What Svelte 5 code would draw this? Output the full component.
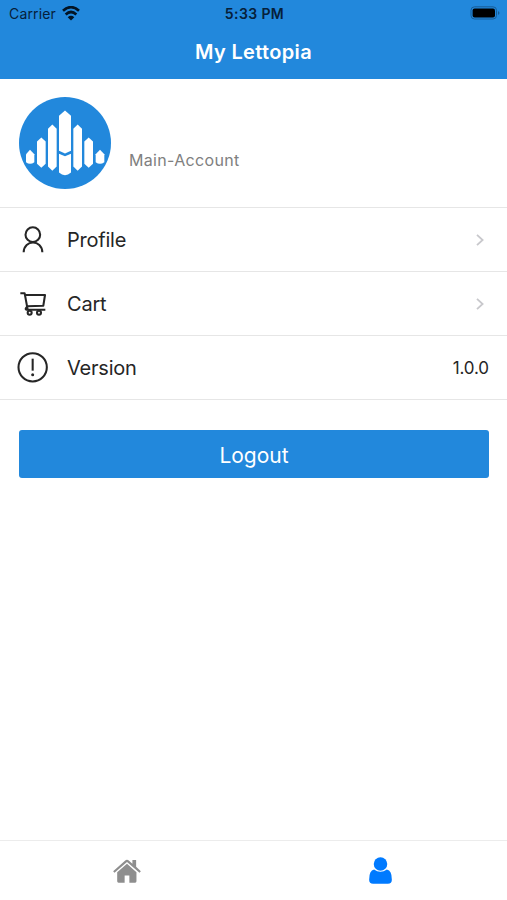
<script>
	const version = '1.0.0';
	const rows = [
		{ title: 'Profile', icon: 'person' },
		{ title: 'Cart', icon: 'cart' },
		{ title: 'Version', icon: 'alert', value: version }
	];

	let activeTab = $state('account');
</script>

<div class="screen">
	<header>
		<div class="status">
			<div class="carrier">
				<span>Carrier</span>
				<svg class="wifi" viewBox="0 0 54 44">
					<path d="M3 14 Q27 -8 51 14" />
					<path d="M11 25 Q27 10 43 25" />
					<path class="dot" d="M17 33 Q27 25 37 33 L27 43 Z" />
				</svg>
			</div>
			<span class="time">5:33 PM</span>
			<svg class="battery" viewBox="0 0 30 14">
				<rect class="shell" x="1" y=".8" width="25.5" height="12.2" rx="3.5" />
				<rect x="2.6" y="2.4" width="22.4" height="9" rx="2" />
				<path class="cap" d="M28 5 Q31 7 28 9 Z" />
			</svg>
		</div>
		<h1>My Lettopia</h1>
	</header>

	<section class="account">
		<svg class="logo" viewBox="27 21.5 276 276">
			<circle cx="165" cy="159.5" r="138" />
			<path d="M48 193 L60 180 L73 193 V217 Q60 227 48 217 Z" />
			<path d="M81 155 L94 143 L107 155 V222 L94 234 L81 222 Z" />
			<path d="M114 117 L127 104 L140 117 V230 L127 243 L114 230 Z" />
			<path d="M147 78 L165 62 L183 78 V183 L165 191 L147 183 Z" />
			<path d="M147 192 L165 199 L183 192 V248 Q165 264 147 248 Z" />
			<path d="M190 117 L203 104 L216 117 V230 L203 243 L190 230 Z" />
			<path d="M223 155 L236 143 L249 155 V222 L236 234 L223 222 Z" />
			<path d="M257 193 L270 180 L283 193 V217 Q270 227 257 217 Z" />
		</svg>
		<span class="role">Main-Account</span>
	</section>

	{#each rows as row}
		<div class="row">
			{#if row.icon === 'person'}
				<svg class="icon" viewBox="51 72 96 96">
					<circle cx="98.5" cy="104" r="22" />
					<path d="M71 157 C72 118 126 118 127 157" />
				</svg>
			{:else if row.icon === 'cart'}
				<svg class="icon" viewBox="51 -6 96 96">
					<path d="M61 10 H74 L83 59 M75 15 H135 L130 47 L81 49 M83 49 Q73 58 80 59 H136" />
					<circle cx="89" cy="68" r="6" />
					<circle cx="117" cy="68" r="6" />
				</svg>
			{:else}
				<svg class="icon" viewBox="51 186 96 96">
					<circle cx="98" cy="232" r="42.5" />
					<path d="M98 206 V242" />
					<circle class="point" cx="98" cy="254" r="4.5" />
				</svg>
			{/if}
			<span class="title">{row.title}</span>
			{#if row.value}
				<span class="value">{row.value}</span>
			{:else}
				<svg class="chevron" viewBox="0 0 10 14">
					<path d="M2 1.8 L7.6 7 L2 12.2" />
				</svg>
			{/if}
		</div>
	{/each}

	<button class="logout">Logout</button>

	<nav>
		<button class="tab" class:active={activeTab === 'home'} aria-label="Home" onclick={() => (activeTab = 'home')}>
			<svg class="home" viewBox="72 85 82 71">
				<path d="M72 121 L107 90 Q113 85 119 90 L129 99 V88 H140 V108 L154 121 L150 126 L113 94 L76 126 Z" />
				<path d="M84 124 L113 99 L141 124 V151 Q141 155 137 155 H120 V134 H106 V155 H88 Q84 155 84 151 Z" />
			</svg>
		</button>
		<button class="tab" class:active={activeTab === 'account'} aria-label="Account" onclick={() => (activeTab = 'account')}>
			<svg class="user" viewBox="87 80 69 82">
				<circle cx="121.5" cy="101" r="20.5" />
				<path d="M102 118 Q121 132 141 118 Q156 120 156 149 Q156 161 144 161 H99 Q87 161 87 149 Q87 120 102 118 Z" />
			</svg>
		</button>
	</nav>
</div>

<style>
	:global(body) {
		background: #fff;
	}
	.screen {
		display: flex;
		flex-direction: column;
		height: 900px;
		font-family: Inter, "Liberation Sans", sans-serif;
		color: #262626;
	}
	svg {
		display: block;
		flex: none;
	}
	button {
		border: none;
		padding: 0;
		font-family: inherit;
		cursor: pointer;
	}
	header {
		height: 79px;
		background: #2288dc;
	}
	.status {
		display: grid;
		grid-template-columns: 1fr auto 1fr;
		align-items: center;
		height: 27px;
		padding: 0 7px 0 9px;
		font-size: 14px;
		color: #06203a;
	}
	.carrier {
		display: flex;
		align-items: center;
		gap: 6px;
		letter-spacing: 0.15px;
	}
	.wifi {
		width: 18px;
		height: 15px;
		margin-top: -1px;
		fill: none;
		stroke: #031424;
		stroke-width: 8;
	}
	.wifi .dot {
		fill: #031424;
		stroke: none;
	}
	.time {
		font-weight: 600;
		letter-spacing: 0.4px;
	}
	.battery {
		justify-self: end;
		width: 30px;
		height: 14px;
		margin-top: -1px;
	}
	.battery .shell {
		fill: none;
		stroke: #175d97;
		stroke-width: 1;
	}
	.battery .cap {
		fill: #175d97;
	}
	h1 {
		margin: 0;
		font-size: 20px;
		font-weight: 600;
		line-height: 51px;
		letter-spacing: 0.35px;
		text-align: center;
		color: #fff;
	}
	.account {
		display: flex;
		align-items: center;
		box-sizing: border-box;
		height: 129px;
		padding: 0 19px;
		border-bottom: 1px solid #e6e6e6;
	}
	.logo {
		width: 92px;
		height: 92px;
		fill: #fff;
	}
	.logo circle {
		fill: #2288dc;
	}
	.role {
		margin: 33px 0 0 18px;
		font-size: 16px;
		letter-spacing: 0.32px;
		color: #808080;
	}
	.row {
		display: flex;
		align-items: center;
		box-sizing: border-box;
		height: 64px;
		padding: 0 18px 0 17px;
		border-bottom: 1px solid #e6e6e6;
	}
	.icon {
		width: 32px;
		height: 32px;
		margin-right: 18px;
		fill: none;
		stroke: #262626;
		stroke-width: 6.2;
		stroke-linejoin: round;
	}
	.icon .point {
		fill: #262626;
		stroke: none;
	}
	.title {
		flex: 1;
		font-size: 20px;
		letter-spacing: -0.22px;
	}
	.value {
		font-size: 17px;
		letter-spacing: -0.1px;
	}
	.chevron {
		width: 10px;
		height: 14px;
		margin-right: 4px;
		fill: none;
		stroke: #c8c8cc;
		stroke-width: 1.8;
	}
	.logout {
		height: 48px;
		margin: 30px 18px 0 19px;
		padding-top: 2px;
		border-radius: 3px;
		background: #2288dc;
		font-size: 21px;
		color: #fff;
	}
	nav {
		display: flex;
		box-sizing: border-box;
		height: 60px;
		margin-top: auto;
		border-top: 1px solid #ececec;
	}
	.tab {
		display: flex;
		flex: 1;
		align-items: center;
		justify-content: center;
		background: none;
		color: #8e8e8e;
	}
	.tab.active {
		color: #007aff;
	}
	.tab svg {
		fill: currentColor;
	}
	.home {
		width: 28px;
		height: 24px;
		margin-left: 1px;
	}
	.user {
		width: 23px;
		height: 27px;
	}
</style>
